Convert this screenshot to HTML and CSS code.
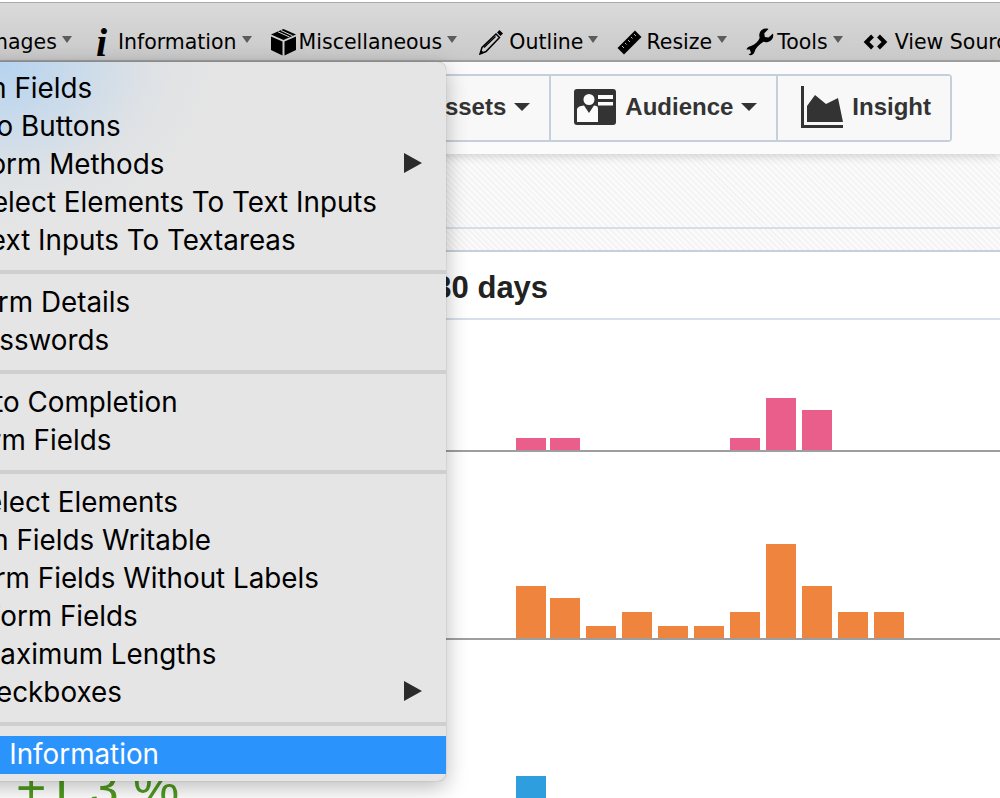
FILE: index.html
```html
<!DOCTYPE html>
<html lang="en">

<head>
    <meta charset="UTF-8">
    <title>Forms menu</title>
    <link rel="stylesheet" href="styles.css">
</head>

<body>
    <div class="toolbar">
        <div class="tool tool-first"><span>Images</span><i class="arrow"></i></div>
        <div class="tool tool-info">
            <span class="info-icon">i</span>
            <span>Information</span><i class="arrow"></i>
        </div>
        <div class="tool tool-misc">
            <svg class="icon icon-tight" width="27" height="28" viewBox="0 0 27 28">
                <path d="M13.5 1 L26 6.5 L13.5 12 L1 6.5 Z" fill="#000" />
                <path d="M1 8.5 L12.5 13.5 V27.5 L1 22 Z M26 8.5 L14.5 13.5 V27.5 L26 22 Z" fill="#000" />
                <path d="M8 3.8 L19.5 9 M11 2.5 L22.5 7.8" stroke="#d4d4d4" stroke-width="1" />
            </svg>
            <span>Miscellaneous</span><i class="arrow"></i>
        </div>
        <div class="tool">
            <svg class="icon icon-wide" width="24" height="26" viewBox="0 0 24 26">
                <path d="M1 25 L3 18.500 L17 5 L20.500 8.500 L7 22.500 Z" fill="none" stroke="#000" stroke-width="1.500" />
                <path d="M1 25 L2.200 21 L4.800 23.600 Z" fill="#000" />
                <path d="M5 18.500 L16.500 7.500" stroke="#000" stroke-width="1.300" />
                <path d="M18 3.500 L20.500 1 L24 4.500 L21.500 7 Z" fill="#000" />
            </svg>
            <span>Outline</span><i class="arrow"></i>
        </div>
        <div class="tool">
            <svg class="icon" width="25" height="25" viewBox="0 0 25 25">
                <path d="M0.5 18 L18 0.5 L24.5 7 L7 24.500 Z" fill="#000" />
                <path d="M5 16 L7 18 M8 13 L9.500 14.500 M11 10 L13 12 M14 7 L15.500 8.500 M17 4 L19 6" stroke="#bbb" stroke-width="1" />
            </svg>
            <span>Resize</span><i class="arrow"></i>
        </div>
        <div class="tool">
            <svg class="icon icon-narrow" width="28" height="28" viewBox="0 0 28 28">
                <path d="M27 5.500 L22.500 9.500 L18.800 9 L18.300 5.300 L22.500 1 C18.500 -0.500 14.500 1.500 13.500 5.500 C13.100 7 13.200 8.500 13.700 9.800 C12.500 13 9.500 16.500 5 18 C2.500 18.500 1 19.500 0.500 21.500 L3.800 21.500 L5 25 L2.500 26.800 C5 28 8 26.500 8.500 24 C9.500 20 13 16.800 17.500 13.800 C19 14.300 20.500 14.400 22 14 C26 13 28 9.500 27 5.500 Z" fill="#000" />
            </svg>
            <span>Tools</span><i class="arrow"></i>
        </div>
        <div class="tool">
            <svg class="icon icon-wide" width="27" height="18" viewBox="0 0 27 18">
                <path d="M10.500 3 L4.500 9 L10.500 15 M16.500 3 L22.500 9 L16.500 15" fill="none" stroke="#000" stroke-width="4" />
            </svg>
            <span>View Source</span><i class="arrow"></i>
        </div>
    </div>

    <div class="nav">
        <div class="btn-group">
            <div class="nav-btn">Assets<i class="caret"></i></div>
            <div class="nav-btn">
                <svg width="42" height="36" viewBox="0 0 42 36">
                    <rect width="42" height="36" rx="3" fill="#333" />
                    <circle cx="15" cy="10.500" r="5.500" fill="#fcfcfc" />
                    <path d="M3 33 V21 C3 18 6 17 10 16.500 L15 24 L20 16.500 C24 17 24 18 24 21 V33 Z" fill="#fcfcfc" />
                    <rect x="24" y="6" width="15" height="4" fill="#fcfcfc" />
                    <rect x="24" y="13" width="15" height="3.500" fill="#fcfcfc" />
                </svg>
                <span>Audience</span><i class="caret"></i>
            </div>
            <div class="nav-btn nav-btn-last">
                <svg width="42" height="42" viewBox="0 0 42 42">
                    <path d="M0 0 H3 V39 H42 V42 H0 Z" fill="#333" />
                    <path d="M6 36 V20 L14 9 L25 18 L37 12 L42 36 Z" fill="#333" />
                </svg>
                <span>Insight</span>
            </div>
        </div>
    </div>

    <div class="stripes">
        <div class="stripes-top"></div>
    </div>

    <div class="panel">
        <h2 class="panel-title">Last 30 days</h2>
        <div class="chart chart-pink">
            <div class="bar" style="height:12px"></div>
            <div class="bar" style="height:12px"></div>
            <div class="bar" style="height:0"></div>
            <div class="bar" style="height:0"></div>
            <div class="bar" style="height:0"></div>
            <div class="bar" style="height:0"></div>
            <div class="bar" style="height:12px"></div>
            <div class="bar" style="height:52px"></div>
            <div class="bar" style="height:40px"></div>
        </div>
        <div class="chart chart-orange">
            <div class="bar" style="height:52px"></div>
            <div class="bar" style="height:40px"></div>
            <div class="bar" style="height:12px"></div>
            <div class="bar" style="height:26px"></div>
            <div class="bar" style="height:12px"></div>
            <div class="bar" style="height:12px"></div>
            <div class="bar" style="height:26px"></div>
            <div class="bar" style="height:94px"></div>
            <div class="bar" style="height:52px"></div>
            <div class="bar" style="height:26px"></div>
            <div class="bar" style="height:26px"></div>
        </div>
        <div class="stat-row">
            <div class="stat">+1.3 %</div>
            <div class="blue-bar"></div>
        </div>
    </div>

    <div class="menu">
        <div class="menu-item">Clear Form Fields</div>
        <div class="menu-item">Clear Radio Buttons</div>
        <div class="menu-item has-sub">Convert Form Methods</div>
        <div class="menu-item">Convert Select Elements To Text Inputs</div>
        <div class="menu-item">Convert Text Inputs To Textareas</div>
        <div class="menu-sep"></div>
        <div class="menu-item">Display Form Details</div>
        <div class="menu-item">Display Passwords</div>
        <div class="menu-sep"></div>
        <div class="menu-item">Enable Auto Completion</div>
        <div class="menu-item">Enable Form Fields</div>
        <div class="menu-sep"></div>
        <div class="menu-item">Expand Select Elements</div>
        <div class="menu-item">Make Form Fields Writable</div>
        <div class="menu-item">Outline Form Fields Without Labels</div>
        <div class="menu-item">Populate Form Fields</div>
        <div class="menu-item">Remove Maximum Lengths</div>
        <div class="menu-item has-sub">Toggle Checkboxes</div>
        <div class="menu-sep"></div>
        <div class="menu-item active">View Form Information</div>
    </div>
</body>

</html>
```

FILE: styles.css
```css
html,
body {
    margin: 0;
    height: 798px;
    overflow: hidden;
    background: #fff;
    font-family: "Liberation Sans", Arial, sans-serif;
}

.toolbar {
    height: 57px;
    display: flex;
    align-items: flex-end;
    margin-top: 2px;
    border-top: 1px solid #a9a9a9;
    border-bottom: 2px solid #a2a2a2;
    background: linear-gradient(#dadada, #c9c9c9);
    font-family: "DejaVu Sans", sans-serif;
    font-size: 20.500px;
    color: #000;
    white-space: nowrap;
}

.tool {
    display: flex;
    align-items: center;
    height: 36px;
    margin-right: 19px;
    flex-shrink: 0;
}

.tool-first {
    margin-left: -18px;
    margin-right: 24px;
}

.tool-info {
    margin-right: 18px;
}

.tool-misc {
    margin-right: 22px;
}

.icon {
    margin-right: 4px;
}

.icon-wide {
    margin-right: 6px;
}

.icon-narrow {
    margin-right: 3px;
}

.icon-tight {
    margin-right: 2px;
}

.info-icon {
    font-family: "Liberation Serif", serif;
    font-style: italic;
    font-weight: bold;
    font-size: 40px;
    width: 22px;
    text-align: left;
}

.arrow {
    width: 0;
    height: 0;
    margin: -6px 0 0 5px;
    border-left: 5px solid transparent;
    border-right: 5px solid transparent;
    border-top: 7px solid #5c5c5c;
}

.nav {
    height: 92px;
    display: flex;
    justify-content: flex-end;
    align-items: flex-start;
    background: #fbfbfb;
    box-shadow: 0 3px 8px rgba(0, 0, 0, 0.15);
    position: relative;
}

.btn-group {
    display: flex;
    height: 64px;
    margin: 12px 48px 0 0;
    border: 2px solid #c5d0dc;
    border-radius: 4px;
}

.nav-btn {
    display: flex;
    align-items: center;
    gap: 9px;
    padding: 0 19px 3px 23px;
    border-right: 2px solid #c5d0dc;
    font-size: 24px;
    font-weight: bold;
    color: #333;
    background: #f8f8f8;
}

.nav-btn-last {
    border-right: none;
}

.caret {
    width: 0;
    height: 0;
    margin-left: -1px;
    border-left: 8px solid transparent;
    border-right: 8px solid transparent;
    border-top: 8px solid #333;
}

.stripes {
    height: 98px;
    box-sizing: border-box;
    border-bottom: 2px solid #c5d0dc;
    background: repeating-linear-gradient(45deg, #f4f4f4 0, #f4f4f4 2.100px, #fbfbfb 2.100px, #fbfbfb 4.200px);
}

.stripes-top {
    height: 73px;
    border-bottom: 2px solid #d5dfe7;
}

.panel {
    background: #fff;
}

.panel-title {
    margin: 0;
    height: 68px;
    padding-left: 362px;
    box-sizing: border-box;
    border-bottom: 2px solid #d5e0ea;
    font-size: 31px;
    line-height: 72px;
    color: #222;
}

.chart {
    display: flex;
    align-items: flex-end;
    gap: 6px;
    padding-left: 516px;
    border-bottom: 2px solid #9e9e9e;
}

.chart-pink {
    height: 130px;
}

.chart-orange {
    height: 186px;
}

.bar {
    width: 30px;
}

.bar:first-child {
    margin-right: -2px;
}

.chart-pink .bar {
    background: #ea5e8c;
}

.chart-orange .bar {
    background: #ef843f;
}

.stat-row {
    display: flex;
    height: 160px;
}

.stat {
    width: 500px;
    padding: 118px 0 0 16px;
    font-size: 52px;
    line-height: 60px;
    color: #4f9a1f;
    white-space: pre;
}

.blue-bar {
    width: 30px;
    height: 30px;
    margin-top: 136px;
    background: #2f9ede;
}

.menu {
    position: absolute;
    top: 62px;
    left: -138px;
    width: 584px;
    box-sizing: border-box;
    padding: 8px 0 7px;
    border-radius: 8px;
    background: radial-gradient(ellipse 220px 170px at 138px 0, #b5d3f0 0, #dfe2e5 70%, #e5e5e5 100%), #e5e5e5;
    box-shadow: 0 6px 22px rgba(0, 0, 0, 0.28), 0 0 1px rgba(0, 0, 0, 0.4);
    font-family: Inter, sans-serif;
    font-size: 27.800px;
    color: #000;
}

.menu-item {
    height: 38px;
    line-height: 37px;
    white-space: nowrap;
    position: relative;
}

.menu-sep {
    height: 4px;
    margin: 10px 0;
    background: #cfcfcf;
}

.has-sub::after {
    content: "";
    position: absolute;
    right: 24px;
    top: 7px;
    border-left: 18px solid #2b2b2b;
    border-top: 10px solid transparent;
    border-bottom: 10px solid transparent;
}

.active {
    background: #2b93fc;
    color: #fff;
}
```
